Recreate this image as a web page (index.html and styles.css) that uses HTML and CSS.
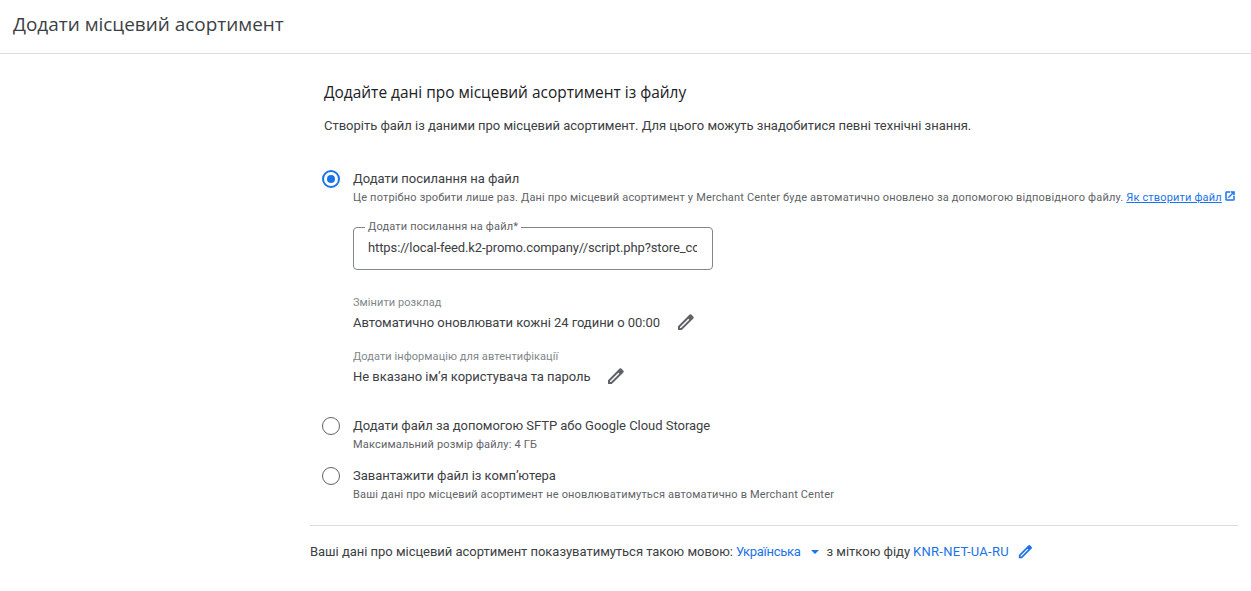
FILE: index.html
```html
<!DOCTYPE html>
<html lang="uk">
<head>
<meta charset="utf-8">
<title>Додати місцевий асортимент</title>
<link rel="stylesheet" href="styles.css">
</head>
<body>
<header class="top"><h1>Додати місцевий асортимент</h1></header>
<main class="main">
  <section class="card">
    <h2>Додайте дані про місцевий асортимент із файлу</h2>
    <p class="lead">Створіть файл із даними про місцевий асортимент. Для цього можуть знадобитися певні технічні знання.</p>
    <div class="option first">
      <span class="radio on"></span>
      <div class="opt-body">
        <div class="opt-title">Додати посилання на файл</div>
        <div class="opt-sub">Це потрібно зробити лише раз. Дані про місцевий асортимент у Merchant Center буде автоматично оновлено за допомогою відповідного файлу. <a class="link" href="#">Як створити файл</a>
          <svg class="ext" viewBox="0 0 24 24" width="12" height="12"><path fill="#1a73e8" stroke="#1a73e8" stroke-width="1" d="M19 19H5V5h7V3H5a2 2 0 0 0-2 2v14a2 2 0 0 0 2 2h14a2 2 0 0 0 2-2v-7h-2v7zM14 3v2h3.6l-9.8 9.8 1.4 1.4L19 6.4V10h2V3h-7z"/></svg>
        </div>
        <fieldset class="field">
          <legend>Додати посилання на файл*</legend>
          <input class="url" type="text" value="https://local-feed.k2-promo.company//script.php?store_code=1" readonly>
        </fieldset>
        <div class="meta sched">
          <div class="meta-label">Змінити розклад</div>
          <div class="meta-row"><span>Автоматично оновлювати кожні 24 години о 00:00</span>
            <svg class="pen" viewBox="0 0 18 18" width="18" height="18"><path fill="#5f6368" fill-rule="evenodd" d="M1 17v-3.8L12.6 1.6a1.2 1.2 0 0 1 1.7 0l2.1 2.1a1.2 1.2 0 0 1 0 1.7L4.8 17H1zM3 15h1l8.3-8.3-1-1L3 14v1z"/></svg>
          </div>
        </div>
        <div class="meta auth">
          <div class="meta-label">Додати інформацію для автентифікації</div>
          <div class="meta-row"><span>Не вказано ім’я користувача та пароль</span>
            <svg class="pen" viewBox="0 0 18 18" width="18" height="18"><path fill="#5f6368" fill-rule="evenodd" d="M1 17v-3.8L12.6 1.6a1.2 1.2 0 0 1 1.7 0l2.1 2.1a1.2 1.2 0 0 1 0 1.7L4.8 17H1zM3 15h1l8.3-8.3-1-1L3 14v1z"/></svg>
          </div>
        </div>
      </div>
    </div>
    <div class="option second">
      <span class="radio"></span>
      <div class="opt-body">
        <div class="opt-title">Додати файл за допомогою SFTP або Google Cloud Storage</div>
        <div class="opt-sub">Максимальний розмір файлу: 4 ГБ</div>
      </div>
    </div>
    <div class="option third">
      <span class="radio"></span>
      <div class="opt-body">
        <div class="opt-title">Завантажити файл із комп’ютера</div>
        <div class="opt-sub">Ваші дані про місцевий асортимент не оновлюватимуться автоматично в Merchant Center</div>
      </div>
    </div>
  </section>
  <footer class="foot">
    <span class="foot-text">Ваші дані про місцевий асортимент показуватимуться такою мовою:</span>
    <span class="blue lang">Українська</span>
    <span class="caret"></span>
    <span class="mark">з міткою фіду</span>
    <span class="blue code">KNR-NET-UA-RU</span>
    <svg class="foot-pen" viewBox="0 0 18 18" width="15" height="15"><path fill="#1a73e8" fill-rule="evenodd" d="M1 17v-3.8L12.6 1.6a1.2 1.2 0 0 1 1.7 0l2.1 2.1a1.2 1.2 0 0 1 0 1.7L4.8 17H1zM3 15h1l8.3-8.3-1-1L3 14v1z"/></svg>
  </footer>
</main>
</body>
</html>
```
FILE: styles.css
```css
* { box-sizing: border-box; }
html, body { margin: 0; padding: 0; }
body { font-family: Roboto, "Liberation Sans", sans-serif; color: #3c4043; background: #fff; font-size: 13px; height: 591px; overflow: hidden; }
.top { height: 54px; border-bottom: 1px solid #dadce0; padding: 10px 13px 0; }
.top h1 { margin: 0; font: 400 18.95px/28px "Open Sans", sans-serif; color: #3c4043; }
.main { width: 928px; margin-left: 310px; }
.card { padding: 0 0 22px 14px; border-bottom: 1px solid #dadce0; }
.card h2 { margin: 0; padding-top: 27px; font: 400 15.45px/22px "Open Sans", sans-serif; color: #202124; }
.lead { margin: 13px 0 0; font-size: 13px; line-height: 20px; color: #3c4043; letter-spacing: -0.02px; }
.option { display: flex; align-items: flex-start; }
.first { margin-top: 34px; }
.second { margin-top: 29px; }
.third { margin-top: 14px; }
.radio { flex: none; width: 18px; height: 18px; margin: 0 13px 0 -2px; border: 1.5px solid #5f6368; border-radius: 50%; }
.radio.on { border: 2px solid #1a73e8; position: relative; }
.radio.on::after { content: ""; position: absolute; inset: 3px; background: #1a73e8; border-radius: 50%; }
.opt-title { font-size: 13px; line-height: 18px; color: #3c4043; letter-spacing: -0.03px; }
.opt-sub { font-size: 11px; line-height: 16px; margin-top: 2px; color: #5f6368; white-space: nowrap; letter-spacing: 0.17px; }
.link { color: #1a73e8; text-decoration: underline; }
.ext { vertical-align: -1px; margin-left: -1px; }
.field { margin: 15px 0 0; padding: 0 14px; width: 360px; height: 49px; border: 1px solid #80868b; border-radius: 4px; }
.field legend { padding: 0 3px; margin-left: -3px; font-size: 11px; line-height: 12px; color: #5f6368; letter-spacing: 0.16px; }
.url { border: 0; outline: 0; width: 329px; padding: 0; margin-top: 5px; font: 400 13px/20px Roboto, sans-serif; color: #3c4043; background: none; letter-spacing: -0.1px; }
.sched { margin-top: 25px; }
.auth { margin-top: 15px; }
.meta-label { font-size: 11px; line-height: 16px; color: #80868b; letter-spacing: 0.07px; }
.meta-row { display: flex; align-items: center; height: 24px; margin-top: -1px; font-size: 13px; color: #3c4043; letter-spacing: -0.04px; }
.pen { width: 18px; height: 18px; margin-left: 17px; }
.foot { display: flex; align-items: center; height: 51px; font-size: 13px; color: #3c4043; }
.foot-text { letter-spacing: -0.03px; }
.blue { color: #1a73e8; }
.lang { margin-left: 3px; letter-spacing: -0.3px; }
.caret { width: 0; height: 0; margin: 0 7px 0 11px; border: 4px solid transparent; border-top-color: #1a73e8; border-bottom: 0; }
.mark { margin-right: 3px; }
.code { letter-spacing: 0.25px; }
.foot-pen { margin-left: 9px; }
```
